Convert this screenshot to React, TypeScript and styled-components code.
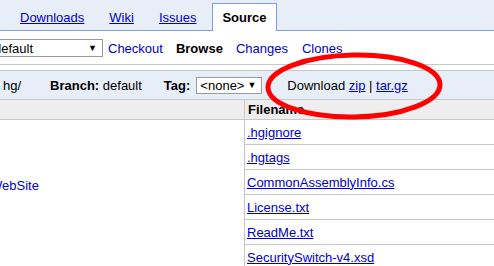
import React from 'react';
import styled, { createGlobalStyle } from 'styled-components';

const GlobalStyle = createGlobalStyle`
  html, body {
    margin: 0;
    padding: 0;
    background: #fff;
    overflow: hidden;
  }
  body {
    font-family: 'Liberation Sans', Arial, sans-serif;
    font-size: 13px;
    color: #000;
  }
`;

const tabs = ['Downloads', 'Wiki', 'Issues'];
const files = [
  '.hgignore',
  '.hgtags',
  'CommonAssemblyInfo.cs',
  'License.txt',
  'ReadMe.txt',
  'SecuritySwitch-v4.xsd',
];

function App() {
  return (
    <Page>
      <GlobalStyle />

      <TabBar>
        {tabs.map((t) => (
          <Tab key={t}>
            <TabLink href="#">{t}</TabLink>
          </Tab>
        ))}
        <Tab $active>Source</Tab>
      </TabBar>

      <SubNav>
        <FakeSelect $width={113} $offset={-10}>
          <span>default</span>
          <Arrow>▼</Arrow>
        </FakeSelect>
        <NavLink href="#" $gap={5}>Checkout</NavLink>
        <NavCurrent>Browse</NavCurrent>
        <NavLink href="#" $gap={13}>Changes</NavLink>
        <NavLink href="#" $gap={14}>Clones</NavLink>
      </SubNav>

      <InfoBar>
        <Path>hg/</Path>
        <Field>
          <b>Branch:</b> default
        </Field>
        <Field $gap={22}>
          <b>Tag:</b>
          <FakeSelect $width={66} $height={17} $offset={6}>
            <span>&lt;none&gt;</span>
            <Arrow>▼</Arrow>
          </FakeSelect>
        </Field>
        <Download>
          Download <a href="#">zip</a> | <a href="#">tar.gz</a>
        </Download>
      </InfoBar>

      <Listing>
        <DirColumn>
          <HeadCell />
          <DirCell>
            <DirLink href="#">WebSite</DirLink>
          </DirCell>
        </DirColumn>
        <FileColumn>
          <HeadCell>Filename</HeadCell>
          {files.map((f) => (
            <FileRow key={f}>
              <a href="#">{f}</a>
            </FileRow>
          ))}
        </FileColumn>
      </Listing>

      <Circle width="190" height="76" viewBox="0 0 190 76">
        <ellipse cx="89" cy="34" rx="86" ry="31" fill="none" stroke="#ff0000" strokeWidth="5" transform="rotate(-1 89 34)" />
      </Circle>
    </Page>
  );
}

export default App;

const Page = styled.div`
  position: relative;
  width: 494px;
  height: 266px;
  overflow: hidden;
`;

const TabBar = styled.div`
  height: 30px;
  padding-left: 8px;
  background: #e8eef8;
  border-bottom: 1px solid #7b9ee6;
  display: flex;
  align-items: flex-end;
  gap: 1px;
`;

const Tab = styled.div<{ $active?: boolean }>`
  padding: 0 ${(p) => (p.$active ? '9px' : '11px')};
  display: flex;
  align-items: center;
  border: 1px solid ${(p) => (p.$active ? '#7b9ee6' : 'transparent')};
  border-bottom: none;
  margin-bottom: ${(p) => (p.$active ? '-1px' : '0')};
  height: ${(p) => (p.$active ? '27px' : '26px')};
  background: ${(p) => (p.$active ? '#fff' : 'transparent')};
  font-weight: ${(p) => (p.$active ? 'bold' : 'normal')};
  margin-left: ${(p) => (p.$active ? '3px' : '0')};
`;

const TabLink = styled.a`
  color: #0000cc;
  text-decoration: underline;
`;

const SubNav = styled.div`
  height: 32px;
  padding-top: 1px;
  display: flex;
  align-items: center;
  border-bottom: 1px solid #c8c8c8;
  margin-bottom: 5px;
`;

const FakeSelect = styled.div<{ $width: number; $height?: number; $offset?: number }>`
  box-sizing: border-box;
  width: ${(p) => p.$width}px;
  height: ${(p) => p.$height ?? 18}px;
  margin-left: ${(p) => p.$offset ?? 5}px;
  padding: 0 5px 0 3px;
  border: 1px solid #9a9a9a;
  background: #fff;
  display: flex;
  align-items: center;
  justify-content: space-between;
  font-size: 13px;
  font-weight: normal;
`;

const Arrow = styled.span`
  font-size: 9px;
  color: #000;
`;

const NavLink = styled.a<{ $gap: number }>`
  margin-left: ${(p) => p.$gap}px;
  color: #0000cc;
  text-decoration: none;
`;

const NavCurrent = styled.span`
  margin-left: 13px;
  font-weight: bold;
`;

const InfoBar = styled.div`
  height: 28px;
  border-top: 1px solid #c8c8c8;
  border-bottom: 1px solid #c8c8c8;
  background: #e8eef8;
  display: flex;
  align-items: center;
`;

const Path = styled.span`
  margin-left: 3px;
`;

const Field = styled.span<{ $gap?: number }>`
  margin-left: ${(p) => p.$gap ?? 29}px;
  display: flex;
  align-items: center;
  white-space: pre;
`;

const Download = styled.span`
  margin-left: 25px;
  white-space: pre;

  a {
    color: #0000cc;
  }
`;

const Listing = styled.div`
  display: flex;
`;

const DirColumn = styled.div`
  width: 244px;
  border-right: 1px solid #c8c8c8;
`;

const FileColumn = styled.div`
  flex: 1;
`;

const HeadCell = styled.div`
  box-sizing: border-box;
  height: 20px;
  padding-left: 3px;
  background: #eeeeee;
  border-bottom: 1px solid #c8c8c8;
  font-weight: bold;
  line-height: 19px;
`;

const DirCell = styled.div`
  padding-top: 58px;
`;

const DirLink = styled.a`
  margin-left: -10px;
  color: #0000cc;
  text-decoration: none;
`;

const FileRow = styled.div`
  height: 24px;
  padding-left: 2px;
  border-bottom: 1px solid #c8c8c8;
  display: flex;
  align-items: center;

  a {
    color: #0000cc;
  }
`;

const Circle = styled.svg`
  position: absolute;
  left: 265px;
  top: 52px;
  pointer-events: none;
`;
